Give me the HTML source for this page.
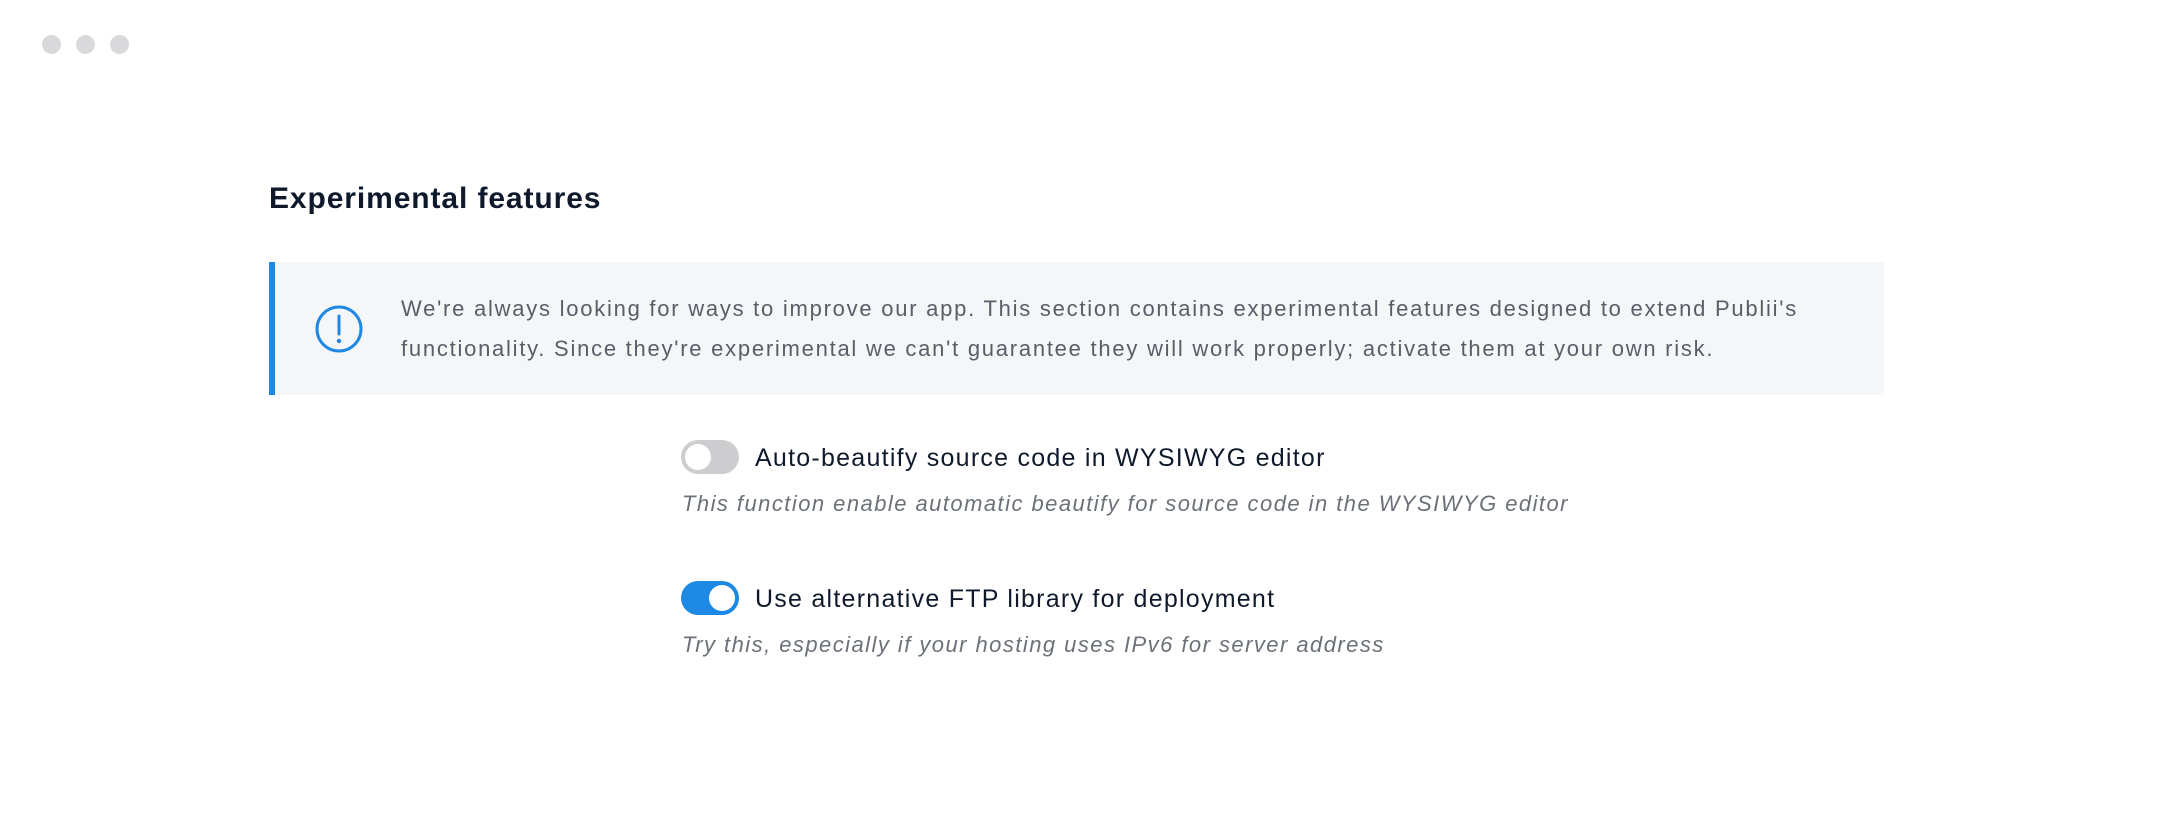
<!DOCTYPE html>
<html><head><meta charset="utf-8"><style>
html,body{margin:0;padding:0;background:#fff;width:2160px;height:813px;overflow:hidden;font-family:"Liberation Sans",sans-serif;}
.dot{position:absolute;top:35px;width:19px;height:19px;border-radius:50%;background:#d9d9db;}
h1{position:absolute;left:269px;top:182px;margin:0;font-size:30px;font-weight:bold;color:#0e1a2b;letter-spacing:0.9px;}
.box{position:absolute;left:269px;top:262px;width:1615px;height:133px;background:#f5f6f8;border-left:6px solid #1e88e5;box-sizing:border-box;}
.box p{position:absolute;left:126px;top:27px;margin:0;font-size:22px;line-height:40px;color:#585e68;width:1600px;letter-spacing:1.75px;white-space:nowrap;}
.tg{position:absolute;left:681px;width:58px;height:34px;border-radius:17px;}
.tg i{position:absolute;top:4px;width:26px;height:26px;border-radius:50%;background:#fff;}
.lbl{position:absolute;left:755px;font-size:25px;color:#0e1a2b;letter-spacing:1.25px;}
.desc{position:absolute;left:682px;font-size:22px;font-style:italic;color:#6b7079;letter-spacing:1.45px;}
</style></head><body>
<div class="dot" style="left:42px"></div><div class="dot" style="left:76px"></div><div class="dot" style="left:110px"></div>
<h1>Experimental features</h1>
<div class="box">
<svg style="position:absolute;left:39px;top:42px" width="50" height="50" viewBox="0 0 50 50"><circle cx="25" cy="25" r="22" fill="none" stroke="#1e88e5" stroke-width="3"/><line x1="25" y1="12" x2="25" y2="30" stroke="#1e88e5" stroke-width="3" stroke-linecap="round"/><circle cx="25" cy="37" r="2.2" fill="#1e88e5"/></svg>
<p>We're always looking for ways to improve our app. This section contains experimental features designed to extend Publii's<br>functionality. Since they're experimental we can't guarantee they will work properly; activate them at your own risk.</p>
</div>
<div class="tg" style="top:440px;background:#cdcdcf"><i style="left:4px"></i></div>
<div class="lbl" style="top:444px">Auto-beautify source code in WYSIWYG editor</div>
<div class="desc" style="top:491px">This function enable automatic beautify for source code in the WYSIWYG editor</div>
<div class="tg" style="top:581px;background:#1e88e5"><i style="left:28px"></i></div>
<div class="lbl" style="top:585px">Use alternative FTP library for deployment</div>
<div class="desc" style="top:632px">Try this, especially if your hosting uses IPv6 for server address</div>
</body></html>
